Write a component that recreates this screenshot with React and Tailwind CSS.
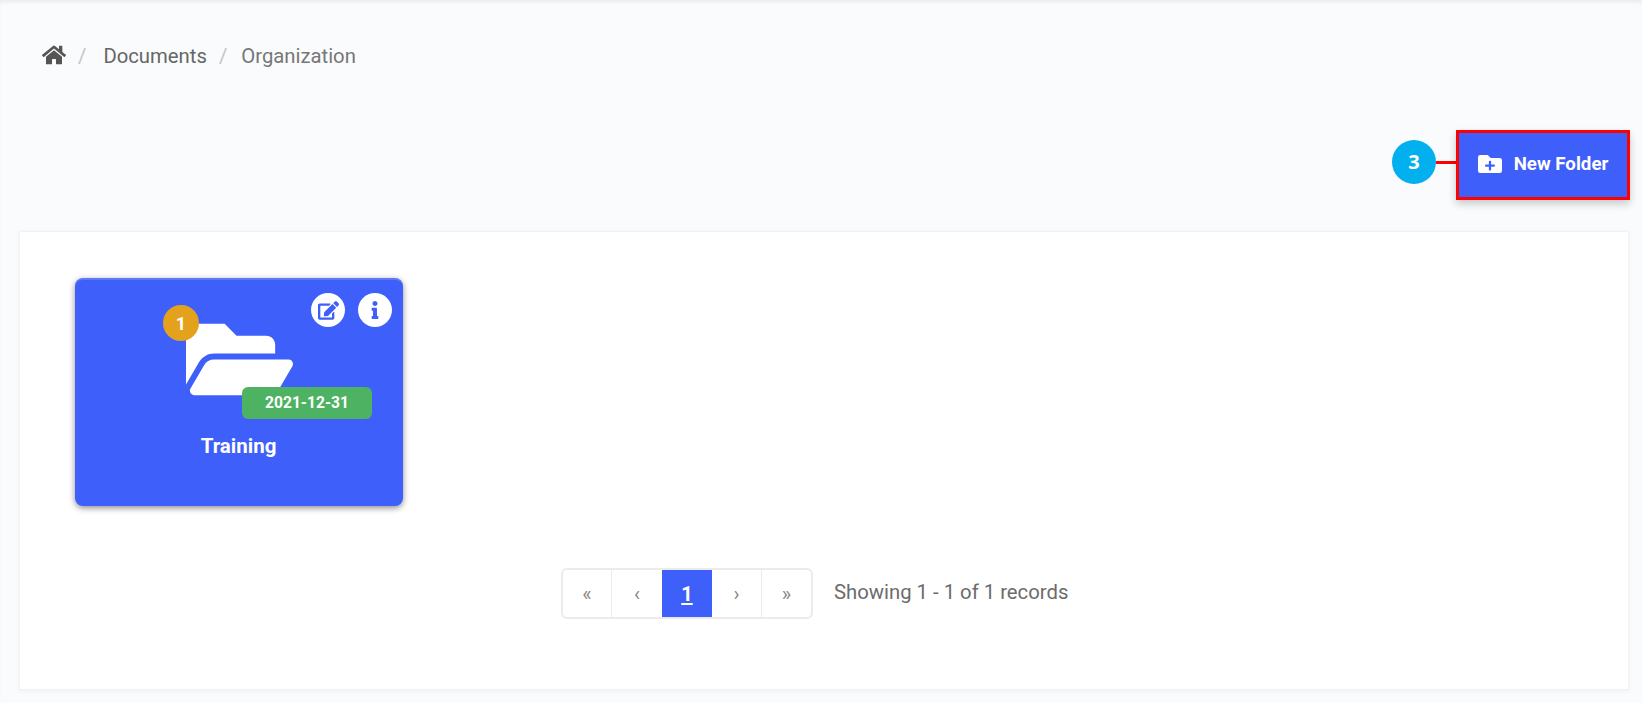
import { FaHome, FaFolderPlus, FaFolderOpen, FaEdit, FaInfo } from 'react-icons/fa';

const pages = [
  { label: '«', w: 'w-[49px]', line: true },
  { label: '‹', w: 'w-[50px]' },
  { label: '1', w: 'w-[50px]', active: true },
  { label: '›', w: 'w-[50px]', line: true },
  { label: '»', w: 'w-[49px]' },
];

export default function App() {
  return (
    <div className="min-h-[703px] h-[703px] overflow-hidden bg-[#fafbfd] font-['Roboto',sans-serif] shadow-[inset_0_4px_4px_-2px_rgba(0,0,0,0.07)]">
      {/* Breadcrumb */}
      <nav className="flex items-center h-[110px] pl-[42px] pt-[3px] text-[20.3px] text-[#6c6c6c]">
        <FaHome size={24} className="text-[#555555] -mt-[3px]" />
        <span className="ml-[12px] text-[#c4c4c4]">/</span>
        <span className="ml-[17px] text-[#666666]">Documents</span>
        <span className="ml-[12px] text-[#c4c4c4]">/</span>
        <span className="ml-[14px] text-[#777777]">Organization</span>
      </nav>

      {/* Toolbar */}
      <div className="flex items-center justify-end h-[70px] mt-[20px] pr-[12px]">
        <div className="w-[44px] h-[44px] mb-[6px] rounded-full bg-[#03b0ef] flex items-center justify-center pb-[1px] text-white font-bold text-[20px] font-['Open_Sans',sans-serif]">
          3
        </div>
        <div className="w-[20px] h-[3px] mb-[6px] bg-[#ff0000]" />
        <button className="flex items-center justify-center w-[174px] h-[70px] pb-[2px] bg-[#3e5ffa] border-[3px] border-[#ff0000] text-white font-bold text-[18.7px] shadow-[0_4px_8px_rgba(0,0,0,0.2)]">
          <FaFolderPlus size={24} className="mr-[12px] -mt-[1px]" />
          New Folder
        </button>
      </div>

      {/* Panel */}
      <div className="mt-[31px] ml-[19px] mr-[13px] h-[459px] bg-white border border-[#f1f2f5] shadow-[0_1px_4px_rgba(0,0,0,0.05)] pt-[46px] pl-[55px]">
        <div className="relative w-[328px] h-[228px] rounded-[8px] bg-[#3e5ffa] border-t-2 border-[#5c78f5] shadow-[0_2px_6px_rgba(0,0,0,0.45)] flex flex-col items-center">
          <div className="absolute top-[13px] right-[11px] flex gap-[13px]">
            <div className="w-[34px] h-[34px] rounded-full bg-white flex items-center justify-center text-[#3e5ffa]">
              <FaEdit size={21} />
            </div>
            <div className="w-[34px] h-[34px] rounded-full bg-white flex items-center justify-center text-[#3e5ffa]">
              <FaInfo size={18} />
            </div>
          </div>

          <div className="mt-[26px]">
            <FaFolderOpen size={107} className="text-white" />
          </div>

          <div className="absolute top-[25px] left-[88px] w-[36px] h-[36px] rounded-full bg-[#e4a11b] flex items-center justify-center text-white font-bold text-[18px]">
            1
          </div>
          <div className="absolute top-[107px] left-[167px] w-[130px] h-[32px] pt-[1px] rounded-[6px] bg-[#4db362] flex items-center justify-center text-white font-bold text-[15.6px]">
            2021-12-31
          </div>

          <div className="mt-[21px] mr-[1px] text-white font-bold text-[20.5px] leading-[24px]">Training</div>
        </div>

        {/* Pagination */}
        <div className="flex items-center mt-[62px] ml-[486px]">
          <div className="flex h-[51px] rounded-[6px] border-2 border-[#ebebeb] overflow-hidden">
            {pages.map((p, i) =>
              p.active ? (
                <div key={i} className={`${p.w} -my-[2px] bg-[#3e5ffa] text-white font-bold underline underline-offset-2 text-[20px] flex items-center justify-center`}>
                  {p.label}
                </div>
              ) : (
                <div key={i} className={`${p.w} ${p.line ? 'border-r' : ''} border-[#ebebeb] text-[#888888] text-[20px] flex items-center justify-center`}>
                  {p.label}
                </div>
              )
            )}
          </div>
          <span className="ml-[21px] -mt-[2px] text-[20.3px] text-[#6c6c6c]">Showing 1 - 1 of 1 records</span>
        </div>
      </div>
    </div>
  );
}
